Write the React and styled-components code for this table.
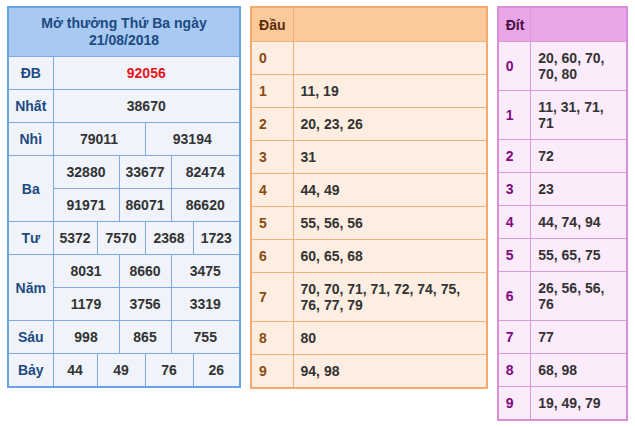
import React from 'react';
import styled, { createGlobalStyle } from 'styled-components';

const GlobalStyle = createGlobalStyle`
  body {
    margin: 0;
    background: #ffffff;
    font-family: "Liberation Sans", Arial, sans-serif;
  }
`;

const Page = styled.div`
  display: flex;
  align-items: flex-start;
  gap: 9px;
  padding: 6px 7px;
`;

const Table = styled.table`
  border-collapse: collapse;
  table-layout: fixed;
  width: ${(p) => p.$width}px;
  border: 2px solid ${(p) => p.$border};
  font-size: 14px;
  font-weight: bold;
  color: #333333;
`;

const Col = styled.col`
  width: ${(p) => (p.$w ? `${p.$w}px` : 'auto')};
`;

// ---- Kết quả (blue) ----
const TitleCell = styled.th`
  height: 48px;
  padding: 0 6px;
  background: #a8c9f1;
  color: #1d4a82;
  font-size: 14px;
  line-height: 17px;
  text-align: center;
  border: 1px solid #7daae6;
`;

const PrizeLabel = styled.td`
  height: 32px;
  padding: 0;
  background: #f0f4fa;
  color: #1d4a82;
  text-align: center;
  border: 1px solid #7daae6;
`;

const PrizeValue = styled.td`
  height: 32px;
  padding: 0;
  background: #f0f4fa;
  color: ${(p) => (p.$special ? '#e8141b' : '#333333')};
  text-align: center;
  border: 1px solid #7daae6;
`;

// ---- Lô tô (orange / purple) ----
const HeadCell = styled.th`
  height: 33px;
  padding: 0 7px;
  text-align: left;
  background: ${(p) => p.$bg};
  color: ${(p) => p.$color};
  border: 1px solid ${(p) => p.$line};
`;

const KeyCell = styled.td`
  height: ${(p) => (p.$tall ? 48 : 32)}px;
  padding: 0 7px;
  background: ${(p) => p.$bg};
  color: ${(p) => p.$color};
  border: 1px solid ${(p) => p.$line};
`;

const ListCell = styled.td`
  padding: 0 ${(p) => p.$padRight}px 0 7px;
  line-height: 16px;
  background: ${(p) => p.$bg};
  color: #333333;
  border: 1px solid ${(p) => p.$line};
`;

const prizes = [
  { label: 'ĐB', rows: [[['92056', 6, true]]] },
  { label: 'Nhất', rows: [[['38670', 6]]] },
  { label: 'Nhì', rows: [[['79011', 3], ['93194', 3]]] },
  {
    label: 'Ba',
    rows: [
      [['32880', 2], ['33677', 2], ['82474', 2]],
      [['91971', 2], ['86071', 2], ['86620', 2]],
    ],
  },
  { label: 'Tư', rows: [[['5372', 1], ['7570', 2], ['2368', 2], ['1723', 1]]] },
  {
    label: 'Năm',
    rows: [
      [['8031', 2], ['8660', 2], ['3475', 2]],
      [['1179', 2], ['3756', 2], ['3319', 2]],
    ],
  },
  { label: 'Sáu', rows: [[['998', 2], ['865', 2], ['755', 2]]] },
  { label: 'Bảy', rows: [[['44', 1], ['49', 2], ['76', 2], ['26', 1]]] },
];

// column widths of the prize grid (label + 6 sub columns)
const prizeCols = [45, 44, 22, 26, 26, 22, 47];

const dau = [
  '', '11, 19', '20, 23, 26', '31', '44, 49', '55, 56, 56', '60, 65, 68',
  '70, 70, 71, 71, 72, 74, 75, 76, 77, 79', '80', '94, 98',
];

const dit = [
  '20, 60, 70, 70, 80', '11, 31, 71, 71', '72', '23', '44, 74, 94',
  '55, 65, 75', '26, 56, 56, 76', '77', '68, 98', '19, 49, 79',
];

const orange = { border: '#f3aa6c', line: '#f0b27c', head: '#fbca9b', bg: '#fdeee1', key: '#8a4a12', headText: '#5a2a08' };
const purple = { border: '#d98ed9', line: '#d99ad9', head: '#e8a6e8', bg: '#fcebfb', key: '#7e0a80', headText: '#4a1040' };

function ResultTable() {
  return (
    <Table $width={233} $border="#6aa2ea">
      <colgroup>
        {prizeCols.map((w, i) => <Col key={i} $w={w} />)}
      </colgroup>
      <thead>
        <tr>
          <TitleCell colSpan={7}>Mở thưởng Thứ Ba ngày<br />21/08/2018</TitleCell>
        </tr>
      </thead>
      <tbody>
        {prizes.map((p) =>
          p.rows.map((cells, i) => (
            <tr key={p.label + i}>
              {i === 0 && <PrizeLabel rowSpan={p.rows.length}>{p.label}</PrizeLabel>}
              {cells.map(([num, span, special], j) => (
                <PrizeValue key={j} colSpan={span} $special={special}>{num}</PrizeValue>
              ))}
            </tr>
          ))
        )}
      </tbody>
    </Table>
  );
}

function LotoTable({ title, data, theme, width, keyWidth, padRight, wrapAt }) {
  return (
    <Table $width={width} $border={theme.border}>
      <colgroup>
        <Col $w={keyWidth} />
        <Col />
      </colgroup>
      <thead>
        <tr>
          <HeadCell $bg={theme.head} $color={theme.headText} $line={theme.line}>{title}</HeadCell>
          <HeadCell $bg={theme.head} $color={theme.headText} $line={theme.line} />
        </tr>
      </thead>
      <tbody>
        {data.map((list, i) => (
          <tr key={i}>
            <KeyCell $bg={theme.bg} $color={theme.key} $line={theme.line} $tall={list.length > wrapAt}>
              {i}
            </KeyCell>
            <ListCell $bg={theme.bg} $line={theme.line} $padRight={padRight}>{list}</ListCell>
          </tr>
        ))}
      </tbody>
    </Table>
  );
}

export default function App() {
  return (
    <>
      <GlobalStyle />
      <Page>
        <ResultTable />
        <LotoTable title="Đầu" data={dau} theme={orange} width={239} keyWidth={42} padRight={10} wrapAt={26} />
        <LotoTable title="Đít" data={dit} theme={purple} width={132} keyWidth={33} padRight={6} wrapAt={12} />
      </Page>
    </>
  );
}
